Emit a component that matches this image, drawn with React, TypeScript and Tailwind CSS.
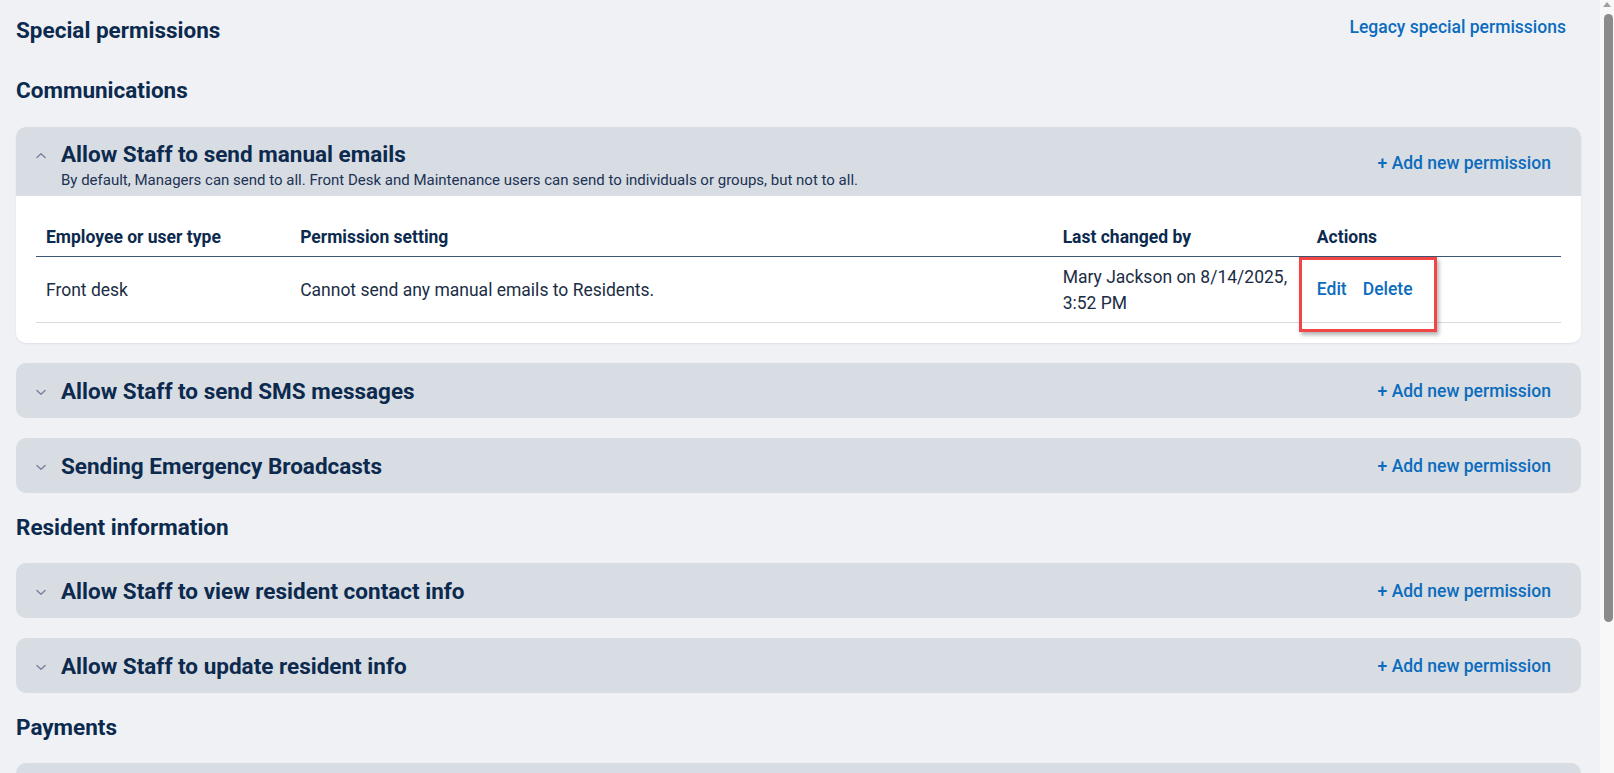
import React from "react";

type Row = {
  who: string;
  setting: string;
  changedBy: string;
};

const Chevron = ({ up }: { up?: boolean }) => (
  <svg
    width="11"
    height="7"
    viewBox="0 0 11 7"
    className={up ? "rotate-180" : ""}
    fill="none"
  >
    <path
      d="M1 1.2 L5.5 5.5 L10 1.2"
      stroke="#76849a"
      strokeWidth="1.5"
      strokeLinecap="round"
      strokeLinejoin="round"
    />
  </svg>
);

const AddLink = ({ className = "" }: { className?: string }) => (
  <a
    className={`shrink-0 text-[17.5px] leading-6 font-medium text-[#0b6cbd] cursor-pointer ${className}`}
  >
    + Add new permission
  </a>
);

const CollapsedCard = ({ title }: { title: string }) => (
  <div className="h-[55px] rounded-[10px] bg-[#d8dce3] flex items-center pl-[20px] pr-[30px]">
    <div className="w-[10px] flex justify-center pt-[3px]">
      <Chevron />
    </div>
    <h3 className="ml-[15px] flex-1 text-[22.5px] leading-7 font-bold text-[#0c2a4e]">
      {title}
    </h3>
    <AddLink />
  </div>
);

const ExpandedCard = ({
  title,
  description,
  rows,
}: {
  title: string;
  description: string;
  rows: Row[];
}) => (
  <div className="rounded-[10px] bg-white shadow-[0_1px_2px_rgba(15,40,80,0.08)]">
    <div className="rounded-t-[10px] bg-[#d8dce3] flex items-center pl-[20px] pr-[30px] pt-[13px] pb-[6px]">
      <div className="flex-1 flex">
        <div className="w-[10px] flex justify-center pt-[12px] self-start">
          <Chevron up />
        </div>
        <div className="ml-[15px]">
          <h3 className="text-[22.5px] leading-7 font-bold text-[#0c2a4e]">
            {title}
          </h3>
          <p className="mt-[2px] text-[15px] leading-5 text-[#1b3354]">
            {description}
          </p>
        </div>
      </div>
      <AddLink className="mb-[5px]" />
    </div>

    <div className="px-5 pt-[21px] pb-5">
      <div className="grid grid-cols-[1fr_3fr_1fr_1fr] border-b-[1.5px] border-[#3d5573] text-[17.5px] leading-[25px] font-bold text-[#0c2a4e]">
        <div className="px-[10px] pt-[8px] pb-[6px]">Employee or user type</div>
        <div className="px-[10px] pt-[8px] pb-[6px]">Permission setting</div>
        <div className="px-[10px] pt-[8px] pb-[6px]">Last changed by</div>
        <div className="px-[10px] pt-[8px] pb-[6px]">Actions</div>
      </div>
      {rows.map((r) => (
        <div
          key={r.who}
          className="grid grid-cols-[1fr_3fr_1fr_1fr] items-center border-b border-[#d6dbe2] text-[17.5px] leading-[25.5px] text-[#1b2d44]"
        >
          <div className="px-[10px] pt-[8px] pb-[6px]">{r.who}</div>
          <div className="px-[10px] pt-[8px] pb-[6px]">{r.setting}</div>
          <div className="px-[10px] pt-[8px] pb-[6px]">{r.changedBy}</div>
          <div className="relative self-stretch flex items-center px-[10px]">
            <div className="flex gap-[16px] font-medium text-[#0b6cbd]">
              <a className="cursor-pointer">Edit</a>
              <a className="cursor-pointer">Delete</a>
            </div>
            <div className="pointer-events-none absolute left-[-8px] top-0 w-[138px] h-[75px] border-[3px] border-[#f04646] shadow-[2px_3px_4px_rgba(0,0,0,0.3)]" />
          </div>
        </div>
      ))}
    </div>
  </div>
);

const SectionHeading = ({ children }: { children: React.ReactNode }) => (
  <h2 className="text-[22.5px] leading-7 font-bold text-[#0c2a4e]">{children}</h2>
);

export default function App() {
  return (
    <div className="h-[773px] w-full overflow-hidden flex bg-[#eff1f5] font-[Roboto,sans-serif]">
      <main className="flex-1 min-w-0 overflow-hidden pl-4 pr-[19px] pt-4">
        <div className="flex items-start justify-between">
          <h1 className="text-[22.5px] leading-7 font-bold text-[#0c2a4e]">
            Special permissions
          </h1>
          <a className="mr-[15px] -mt-[1px] text-[17.5px] leading-6 font-medium text-[#0b6cbd] cursor-pointer">
            Legacy special permissions
          </a>
        </div>

        <section className="mt-[32px]">
          <SectionHeading>Communications</SectionHeading>
          <div className="mt-[23px] flex flex-col gap-5">
            <ExpandedCard
              title="Allow Staff to send manual emails"
              description="By default, Managers can send to all. Front Desk and Maintenance users can send to individuals or groups, but not to all."
              rows={[
                {
                  who: "Front desk",
                  setting: "Cannot send any manual emails to Residents.",
                  changedBy: "Mary Jackson on 8/14/2025, 3:52 PM",
                },
              ]}
            />
            <CollapsedCard title="Allow Staff to send SMS messages" />
            <CollapsedCard title="Sending Emergency Broadcasts" />
          </div>
        </section>

        <section className="mt-[20px]">
          <SectionHeading>Resident information</SectionHeading>
          <div className="mt-[22px] flex flex-col gap-5">
            <CollapsedCard title="Allow Staff to view resident contact info" />
            <CollapsedCard title="Allow Staff to update resident info" />
          </div>
        </section>

        <section className="mt-[20px]">
          <SectionHeading>Payments</SectionHeading>
          <div className="mt-[22px] flex flex-col gap-5">
            {/* first payments card; its header sits below the fold */}
            <div className="h-[55px] rounded-[10px] bg-[#d8dce3]" />
          </div>
        </section>
      </main>

      {/* page scrollbar */}
      <div className="w-[14px] shrink-0 bg-[#f8f8f8] flex flex-col items-center">
        <svg width="8" height="5" viewBox="0 0 8 5" className="mt-[2px]">
          <path d="M0 5 L4 0 L8 5 Z" fill="#a0a0a0" />
        </svg>
        <div className="mt-[7px] ml-[3px] w-[9px] h-[608px] rounded-full bg-[#8b8b8b]" />
      </div>
    </div>
  );
}
